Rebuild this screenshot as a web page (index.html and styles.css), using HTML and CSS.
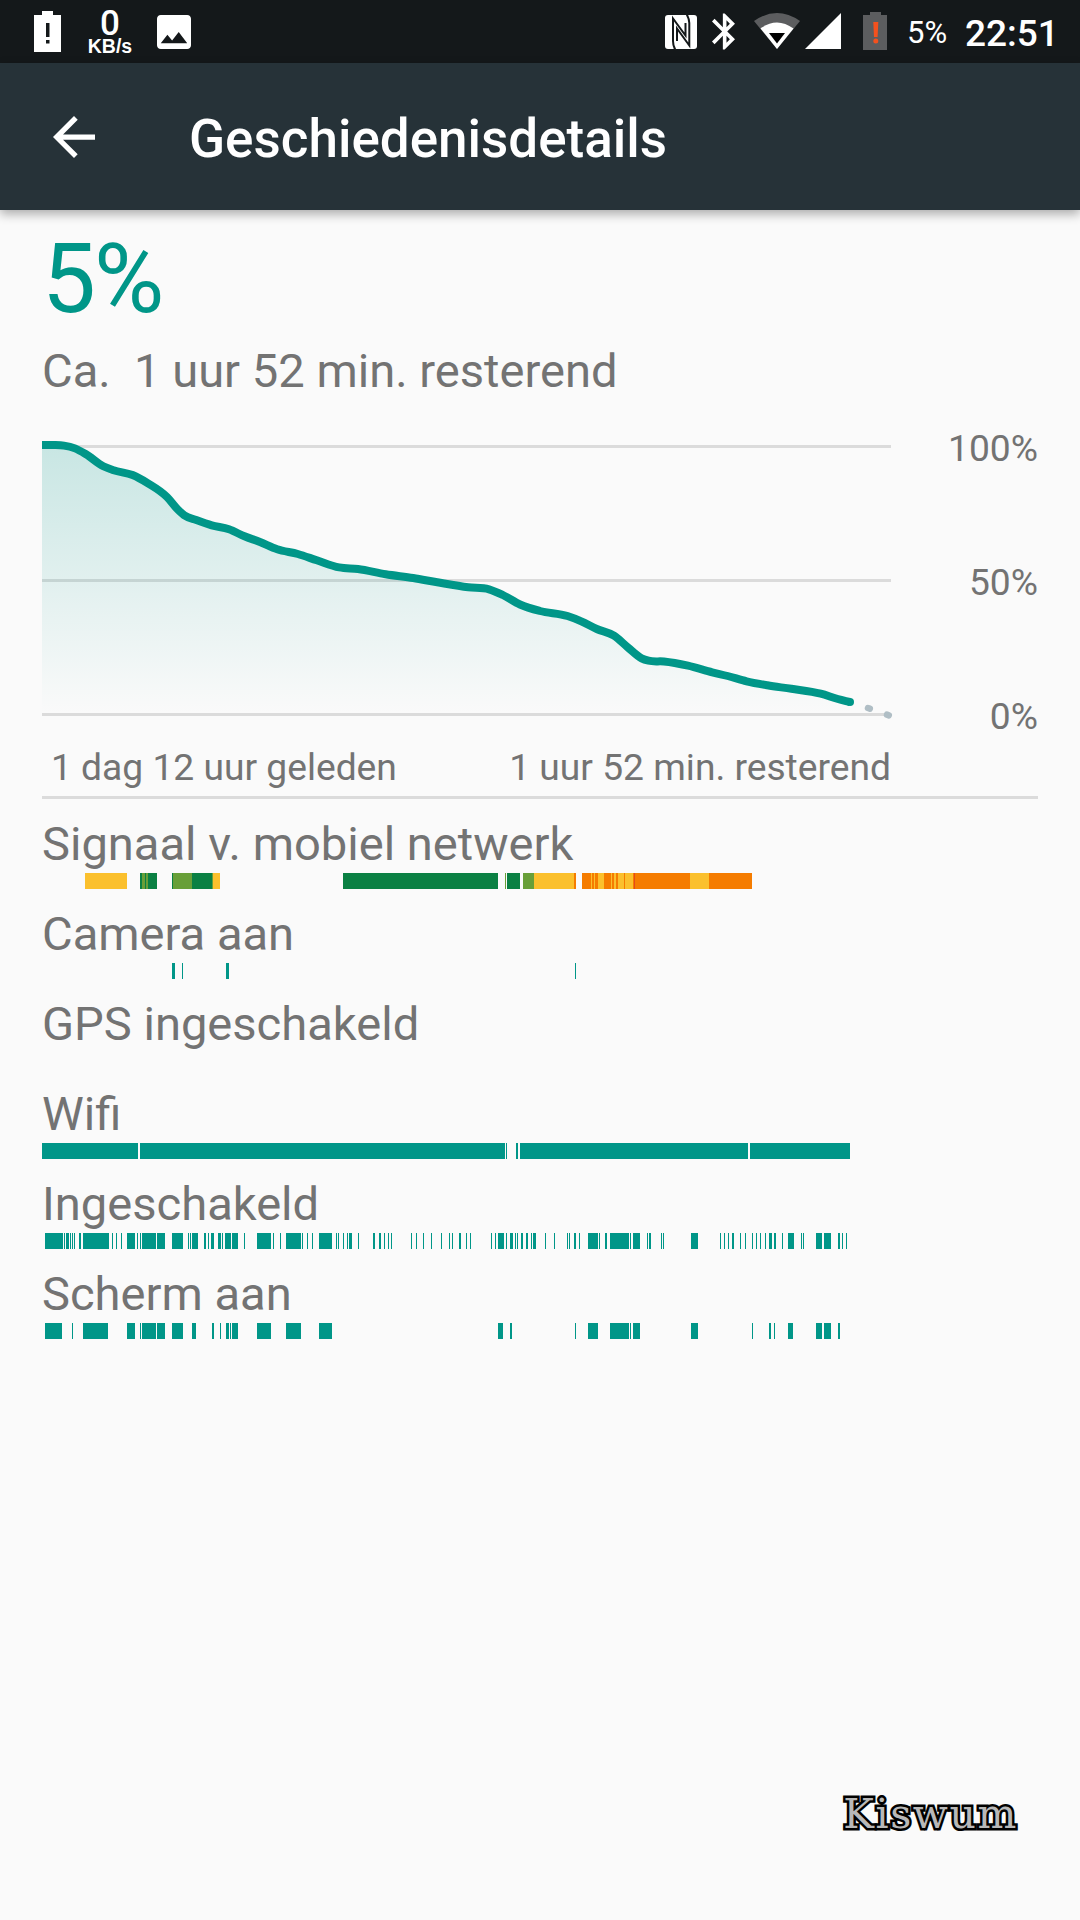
FILE: index.html
```html
<!DOCTYPE html>
<html lang="nl">
<head>
<meta charset="utf-8">
<title>Geschiedenisdetails</title>
<link rel="stylesheet" href="styles.css">
</head>
<body>
<header class="status-bar">
  <div class="status-left">
    <svg class="ic-battery-alert" viewBox="0 0 27 41"><path fill="#fff" fill-rule="evenodd" d="M8 0h11v4h8v37H0V4h8zM12 12v14h3.500V12zM12 29v3.500h3.500V29z"/></svg>
    <div class="net-speed"><span class="net-value">0</span><span class="net-unit">KB/s</span></div>
    <svg class="ic-image" viewBox="3 3 18 18"><path fill="#fff" d="M21 19V5c0-1.100-.9-2-2-2H5c-1.100 0-2 .9-2 2v14c0 1.100.9 2 2 2h14c1.100 0 2-.9 2-2zM8.500 13.500l2.500 3.010L14.500 12l4.500 6H5l3.500-4.500z"/></svg>
  </div>
  <div class="status-right">
    <svg class="ic-nfc" viewBox="0 0 32 34"><rect width="32" height="34" rx="3" fill="#fff"/><path class="nfc-line" d="M10.500 35C8.500 32 8 29 8 26V3.500L20.500 20.500V8M21.500-1C23.800 3 24.300 5 24.300 8V30.500L12 13.500V26"/></svg>
    <svg class="ic-bluetooth" viewBox="5 2 12.710 20"><path fill="#fff" d="M17.710 7.710L12 2h-1v7.590L6.410 5 5 6.410 10.590 12 5 17.590 6.410 19 11 14.410V22h1l5.710-5.710-4.300-4.290 4.300-4.290zM13 5.830l1.880 1.880L13 9.590V5.830zm1.880 10.460L13 18.170v-3.760l1.880 1.880z"/></svg>
    <svg class="ic-wifi" viewBox="0 0 46 36"><path fill="#5c5d5f" d="M0 8Q23-8 46 8L23 36z"/><path fill="#fff" d="M6.500 15.500Q23 3.500 39.500 15.500L23 36z"/><path fill="#000" d="M15 20h16l-8 10.500z"/></svg>
    <svg class="ic-signal" viewBox="0 0 36 36"><path fill="#fff" d="M36 0v36H0z"/></svg>
    <svg class="ic-battery" viewBox="0 0 24 38"><path fill="#5c5d5f" d="M7 0h11v3h6v35H0V3h7z"/><path fill="#f4511e" d="M10.300 10h5l-.7 15h-3.600z"/><circle cx="12.800" cy="29" r="2.500" fill="#f4511e"/></svg>
    <span class="battery-level">5%</span>
    <span class="clock">22:51</span>
  </div>
</header>

<nav class="app-bar">
  <svg class="ic-back" viewBox="4 4 16 16"><path fill="#fff" d="M20 11H7.830l5.590-5.590L12 4l-8 8 8 8 1.410-1.410L7.830 13H20v-2z"/></svg>
  <h1 class="title">Geschiedenisdetails</h1>
</nav>

<main class="content">
  <div class="level">5%</div>
  <div class="remaining">Ca.&nbsp; 1 uur 52 min. resterend</div>

  <section class="chart">
    <svg class="chart-plot" viewBox="42 399 849 348">
      <defs>
        <linearGradient id="fade" gradientUnits="userSpaceOnUse" x1="0" y1="445" x2="0" y2="714">
          <stop offset="0" stop-color="#009688" stop-opacity=".2"/>
          <stop offset="1" stop-color="#009688" stop-opacity="0"/>
        </linearGradient>
      </defs>
      <path class="grid-line" d="M42 446.500H891M42 580.500H891M42 714.500H891"/>
      <path id="area" fill="url(#fade)"/>
      <path class="forecast" d="M868 708l1.800.6M887 714.700l1.800.6"/>
      <path id="curve" class="curve"/>
      <circle cx="850" cy="702" r="4" fill="#009688"/>
    </svg>
    <div class="chart-scale"><span>100%</span><span>50%</span><span>0%</span></div>
  </section>
  <div class="chart-times"><span>1 dag 12 uur geleden</span><span>1 uur 52 min. resterend</span></div>

  <section class="timelines">
    <div class="row"><span>Signaal v. mobiel netwerk</span><svg class="bar" id="signal" viewBox="42 0 849 16"></svg></div>
    <div class="row"><span>Camera aan</span><svg class="bar" id="camera" viewBox="42 0 849 16"></svg></div>
    <div class="row"><span>GPS ingeschakeld</span><svg class="bar" id="gps" viewBox="42 0 849 16"></svg></div>
    <div class="row"><span>Wifi</span><svg class="bar" id="wifi" viewBox="42 0 849 16"></svg></div>
    <div class="row"><span>Ingeschakeld</span><svg class="bar" id="awake" viewBox="42 0 849 16"></svg></div>
    <div class="row"><span>Scherm aan</span><svg class="bar" id="screen" viewBox="42 0 849 16"></svg></div>
  </section>
</main>
<div class="signature">Kiswum</div>
<script src="app.js"></script>
</body>
</html>
```
FILE: styles.css
```css
* { box-sizing: border-box; }

body {
  margin: 0;
  width: 1080px;
  height: 1920px;
  overflow: hidden;
  display: flex;
  flex-direction: column;
  background: #fafafa;
  color: #737373;
  font-family: Roboto, "Liberation Sans", sans-serif;
}

svg { display: block; flex: none; }
span { white-space: nowrap; }

.status-bar {
  height: 63px;
  flex: none;
  display: flex;
  justify-content: space-between;
  align-items: flex-start;
  padding: 0 26px 0 34px;
  background: #14181a;
  color: #fff;
}
.status-left, .status-right { display: flex; align-items: flex-start; }

.ic-battery-alert { width: 27px; height: 41px; margin-top: 11px; }
.net-speed {
  width: 46px;
  margin: 11px 0 0 26px;
  display: flex;
  flex-direction: column;
  align-items: center;
  gap: 3px;
}
.net-value { font-size: 35px; font-weight: 500; line-height: 25px; }
.net-unit { font: bold 19.5px/15px "Liberation Sans", sans-serif; }
.ic-image { width: 34px; height: 34px; margin: 14.500px 0 0 24px; }

.ic-nfc { width: 32px; height: 34px; margin-top: 15px; }
.nfc-line { fill: none; stroke: #14181a; stroke-width: 2; }
.ic-bluetooth { width: 23px; height: 37px; margin: 13px 0 0 15px; }
.ic-wifi { width: 46px; height: 36px; margin: 13px 0 0 19px; }
.ic-signal { width: 36px; height: 36px; margin: 13px 0 0 5px; }
.ic-battery { width: 24px; height: 38px; margin: 12px 0 0 22px; }
.battery-level { margin-left: 20px; width: 41px; font-size: 31px; line-height: 38px; margin-top: 14px; }
.clock { margin-left: 17px; width: 89px; font-size: 37px; font-weight: 500; line-height: 42px; margin-top: 13px; }

.app-bar {
  height: 147px;
  flex: none;
  display: flex;
  align-items: center;
  padding-left: 53px;
  background: #263238;
  box-shadow: 0 4px 10px rgba(0, 0, 0, .32);
}
.ic-back { width: 42px; height: 42px; }
.title {
  margin: 4px 0 0 94px;
  color: #fff;
  font-size: 53px;
  line-height: 62px;
  font-weight: 500;
}

.content { padding: 13px 42px 0; display: flex; flex-direction: column; }
.level { color: #009688; font-size: 96px; line-height: 112px; letter-spacing: -2px; }
.remaining { margin-top: 8px; font-size: 47.1px; line-height: 56px; }

.chart { display: flex; justify-content: space-between; height: 348px; }
.chart-plot { width: 849px; height: 348px; overflow: visible; }
.grid-line { stroke: #dbdbdb; stroke-width: 3; }
.curve { fill: none; stroke: #009688; stroke-width: 8; stroke-linejoin: round; }
.forecast { stroke: #b0bec5; stroke-width: 6.500px; stroke-linecap: round; }
.chart-scale {
  display: flex;
  flex-direction: column;
  gap: 92px;
  padding-top: 28px;
  text-align: right;
  font-size: 37.2px;
  line-height: 42px;
}
.chart-times {
  display: flex;
  justify-content: space-between;
  height: 53px;
  margin-top: -1px;
  padding: 0 147px 0 9px;
  border-bottom: 3px solid #dbdbdb;
  font-size: 37.2px;
  line-height: 42px;
}

.timelines { display: flex; flex-direction: column; gap: 17px; padding-top: 17px; }
.row { display: flex; flex-direction: column; gap: 1px; font-size: 47.1px; line-height: 56px; }
.bar { width: 849px; height: 16px; shape-rendering: crispEdges; }
.bar rect { fill: #009688; }
.bar .great { fill: #0a8043; }
.bar .good { fill: #689f38; }
.bar .moderate { fill: #fbc02d; }
.bar .poor { fill: #f57c00; }
.bar .none { fill: #e64a19; }

.signature {
  margin: auto 62px 82px auto;
  font: 41px/48px "DejaVu Serif", serif;
  letter-spacing: 1.6px;
  color: #b8b8b8;
  -webkit-text-stroke: 5px #000;
  paint-order: stroke fill;
}
```
FILE: app.js
```js
// Each timeline is a list of [start, end] spans along the chart's time axis.
const timelines = {
  signal: [
    [85,127,'moderate'],[140,142,'great'],[142,145,'good'],[145,146,'great'],[146,148,'good'],[148,157,'great'],
    [172,173,'great'],[173,192,'good'],[192,212,'great'],[212,213,'good'],[213,220,'moderate'],
    [343,498,'great'],[505,506,'good'],[507,520,'great'],[523,534,'good'],[534,574,'moderate'],[574,576,'poor'],
    [582,591,'poor'],[591,592,'moderate'],[592,594,'poor'],[594,595,'moderate'],[595,598,'poor'],[598,604,'moderate'],
    [604,611,'poor'],[611,612,'moderate'],[612,614,'poor'],[614,616,'moderate'],[616,618,'poor'],[618,624,'moderate'],
    [624,625,'poor'],[625,633,'moderate'],[633,634,'poor'],[634,635,'none'],[635,690,'poor'],[690,709,'moderate'],[709,752,'poor']
  ],
  camera: [[172,175],[182,183],[226,229],[575,576]],
  gps: [],
  wifi: [[42,138],[140,505],[506,507],[516,518],[520,748],[750,850]],
  awake: [
    [45,63],[64,65],[66,69],[70,71],[72,73],[74,75],[79,81],[83,109],[112,113],[116,117],[121,122],[127,135],[137,138],
    [140,141],[142,156],[157,165],[172,183],[188,189],[190,191],[192,198],[204,206],[208,209],[211,214],[218,221],
    [222,223],[225,231],[232,238],[244,245],[257,271],[273,274],[280,281],[286,301],[302,303],[307,308],[312,313],
    [319,332],[336,337],[338,339],[343,344],[347,348],[349,352],[358,359],[373,375],[379,381],[384,385],[388,389],
    [391,392],[411,412],[416,417],[423,424],[431,432],[441,442],[449,450],[452,453],[459,461],[466,467],[470,471],
    [491,492],[495,496],[498,504],[506,507],[510,513],[515,516],[517,518],[521,523],[526,528],[531,532],[533,536],
    [545,546],[554,555],[567,568],[569,570],[574,576],[579,580],[588,598],[599,600],[605,607],[610,629],[630,631],
    [633,640],[647,648],[649,651],[661,662],[663,664],[691,698],[720,721],[724,725],[728,729],[732,734],[740,741],
    [745,746],[752,753],[756,757],[760,761],[765,766],[769,772],[774,776],[782,783],[788,794],[801,802],[803,804],
    [816,822],[824,831],[838,840],[842,843],[846,847]
  ],
  screen: [
    [45,62],[72,73],[83,108],[127,135],[140,141],[142,156],[157,165],[172,183],[192,196],[212,214],[220,221],[226,229],
    [230,231],[232,238],[257,271],[286,301],[319,332],[498,503],[510,512],[575,576],[588,598],[610,629],[630,631],
    [633,640],[691,698],[752,753],[769,771],[774,775],[788,793],[816,822],[824,831],[838,840]
  ]
};

for (const [id, spans] of Object.entries(timelines)) {
  document.getElementById(id).innerHTML = spans.map(([a, b, level]) =>
    `<rect x="${a}" y="0" width="${b - a}" height="16"${level ? ` class="${level}"` : ''}/>`).join('');
}

const points = [
  [42,445],[53.4,445],[64,445.6],[75,448.4],[86,454.3],[103.3,466.3],[113.6,470.3],[132.6,475],[148,483.3],[167,497],
  [177.3,509],[184.2,515.3],[196.3,520],[211.8,525.3],[229,529.3],[244.5,536.3],[260,542],[277.2,549.3],[297.9,554],
  [316.8,560.3],[339.2,567.4],[358,569],[385.7,574.3],[413.2,578],[437.3,582.3],[468.3,587.3],[489,589.3],
  [502.8,595],[520,604.5],[540,611],[567.5,616],[581.3,621.3],[596.8,629],[614,635.7],[627.8,647.3],[641.6,658.3],
  [648.5,660.7],[664,661.5],[688,665.7],[712.2,672.3],[727.7,676],[746.6,681.3],[767.3,685.3],[791.4,688.8],
  [820.7,693.7],[837.9,699],[850,702]
];

// Smooth the battery curve: each point's slope weighs its two neighbours by their distance.
const slope = i => {
  const a = points[i - 1], b = points[i], c = points[i + 1];
  if (!a) return (c[1] - b[1]) / (c[0] - b[0]);
  if (!c) return (b[1] - a[1]) / (b[0] - a[0]);
  const h0 = b[0] - a[0], h1 = c[0] - b[0];
  return ((b[1] - a[1]) / h0 * h1 + (c[1] - b[1]) / h1 * h0) / (h0 + h1);
};
let d = `M${points[0]}`;
for (let i = 0; i < points.length - 1; i++) {
  const p = points[i], q = points[i + 1], h = (q[0] - p[0]) / 3;
  d += `C${p[0] + h} ${p[1] + h * slope(i)} ${q[0] - h} ${q[1] - h * slope(i + 1)} ${q}`;
}
document.getElementById('curve').setAttribute('d', d);
document.getElementById('area').setAttribute('d', `${d}V714H42Z`);
```
